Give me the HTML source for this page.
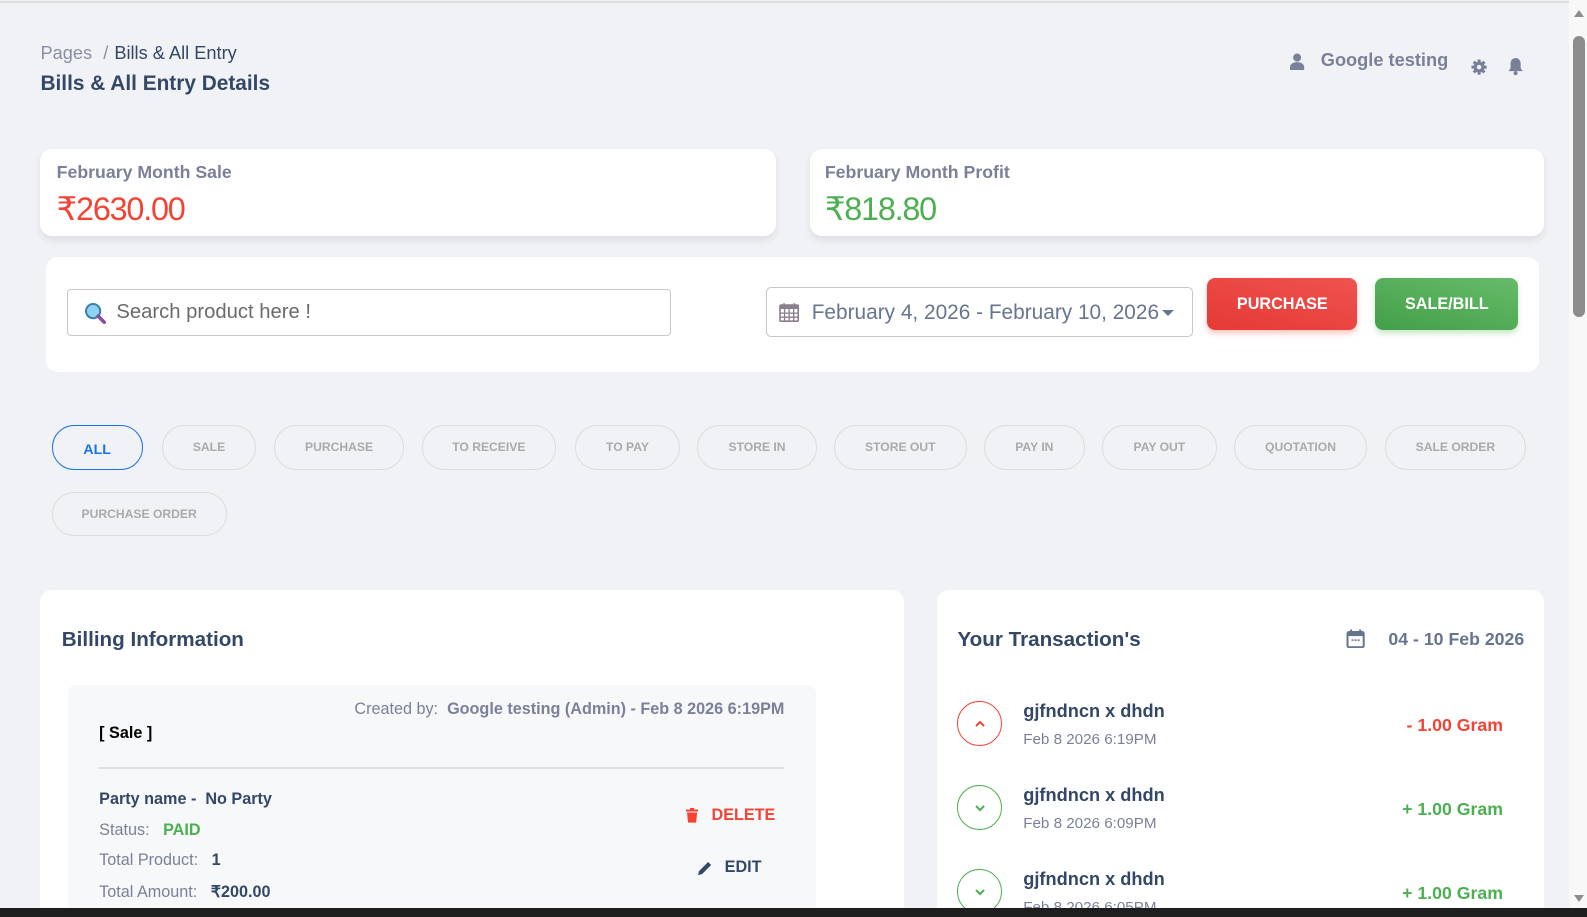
<!DOCTYPE html>
<html><head><meta charset="utf-8"><style>
*{box-sizing:border-box;margin:0;padding:0}
html,body{width:1587px;height:917px;overflow:hidden;background:#f0f2f5;font-family:"Liberation Sans",Arial,sans-serif}
#w{position:relative;width:1568px;height:906px;zoom:1.0121;background:#f0f2f5}
.a{position:absolute;white-space:nowrap}
.card{position:absolute;background:#fff;border-radius:12px}
.chip{position:absolute;height:44px;border:1px solid #dcdcdc;border-radius:22px;font-size:12px;font-weight:bold;color:#aaa;display:flex;align-items:center;justify-content:center;top:420px}
.circ{position:absolute;width:44px;height:44px;border-radius:50%;border:1.5px solid;display:flex;align-items:center;justify-content:center}
.tn{font-size:18px;font-weight:bold;color:#344767}
.td{font-size:15px;color:#7b809a}
</style></head><body><div id="w">
<div class="a" style="left:0;top:1px;width:1550px;height:2px;background:#ddd"></div>
<div class="a" style="left:40px;top:42px;font-size:18px;color:#8a8fa3">Pages <span style="margin:0 6px">/</span><span style="color:#344767">Bills &amp; All Entry</span></div>
<div class="a" style="left:40px;top:71px;font-size:20.6px;font-weight:bold;color:#344767">Bills &amp; All Entry Details</div>
<svg class="a" style="left:1274px;top:52px" width="16" height="17" viewBox="0 0 16 17"><circle cx="8" cy="4.5" r="4" fill="#7b809a"/><path d="M1 17v-3c0-3 3-5 7-5s7 2 7 5v3z" fill="#7b809a"/></svg>
<div class="a" style="left:1305px;top:49px;font-size:18px;font-weight:bold;color:#7b809a">Google testing</div>
<svg class="a" style="left:1453px;top:58px" width="16" height="16" viewBox="0 0 16 16"><g fill="#7b809a"><circle cx="8" cy="8" r="5.5"/><rect x="6.5" y="0.5" width="3" height="15"/><rect x="0.5" y="6.5" width="15" height="3"/><rect x="6.5" y="0.5" width="3" height="15" transform="rotate(45 8 8)"/><rect x="6.5" y="0.5" width="3" height="15" transform="rotate(-45 8 8)"/></g><circle cx="8" cy="8" r="2.2" fill="#f0f2f5"/></svg>
<svg class="a" style="left:1489px;top:56px" width="17" height="19" viewBox="0 0 17 19"><path d="M8.5 1c-3 0-5 2.5-5 5.5v4.5L1.5 14h14l-2-3V6.5C13.5 3.5 11.5 1 8.5 1z" fill="#7b809a"/><circle cx="8.5" cy="16" r="2" fill="#7b809a"/></svg>

<div class="card" style="left:40px;top:147px;width:727px;height:86px;box-shadow:0 4px 8px rgba(0,0,0,.08)"></div>
<div class="a" style="left:56px;top:160px;font-size:17.5px;font-weight:bold;color:#7b809a">February Month Sale</div>
<div class="a" style="left:56px;top:188px;font-size:32px;letter-spacing:-1.2px;color:#f44335">₹2630.00</div>
<div class="card" style="left:800px;top:147px;width:726px;height:86px;box-shadow:0 4px 8px rgba(0,0,0,.08)"></div>
<div class="a" style="left:815px;top:160px;font-size:17.5px;font-weight:bold;color:#7b809a">February Month Profit</div>
<div class="a" style="left:815px;top:188px;font-size:32px;letter-spacing:-1.2px;color:#4caf50">₹818.80</div>

<div class="card" style="left:45px;top:254px;width:1476px;height:114px"></div>
<div class="a" style="left:66px;top:286px;width:597px;height:46px;border:1px solid #c8c8c8;border-radius:4px;background:#fff"></div>
<svg class="a" style="left:83px;top:298px" width="22" height="22" viewBox="0 0 22 22"><circle cx="9" cy="9" r="7" fill="#8fd3f0" stroke="#3a7fb0" stroke-width="2"/><path d="M14 14l6 6" stroke="#8a4aa0" stroke-width="3.5" stroke-linecap="round"/></svg>
<div class="a" style="left:115px;top:297px;font-size:20px;color:#6a6a6a">Search product here !</div>
<div class="a" style="left:757px;top:284px;width:422px;height:49px;border:1px solid #c8c8c8;border-radius:5px;background:#fff"></div>
<svg class="a" style="left:770px;top:298px" width="20" height="20" viewBox="0 0 20 20"><rect x="1" y="3" width="18" height="16" rx="1" fill="none" stroke="#8a7f8f" stroke-width="1.6"/><rect x="1" y="3" width="18" height="4" fill="#8a7f8f"/><path d="M1 11h18M1 15h18M5.5 7v12M10 7v12M14.5 7v12M5 1v4M15 1v4" stroke="#8a7f8f" stroke-width="1.3"/></svg>
<div class="a" style="left:802px;top:297px;font-size:20.6px;color:#67748e">February 4, 2026 - February 10, 2026</div>
<div class="a" style="left:1148px;top:306px;width:0;height:0;border-left:6px solid transparent;border-right:6px solid transparent;border-top:6px solid #67748e"></div>
<div class="a" style="left:1193px;top:275px;width:148px;height:51px;border-radius:8px;background:linear-gradient(195deg,#ef5350,#e53935);box-shadow:0 3px 6px rgba(244,67,53,.3);color:#fff;font-size:16px;font-weight:bold;display:flex;align-items:center;justify-content:center">PURCHASE</div>
<div class="a" style="left:1359px;top:275px;width:141px;height:51px;border-radius:8px;background:linear-gradient(195deg,#66bb6a,#43a047);box-shadow:0 3px 6px rgba(76,175,80,.3);color:#fff;font-size:16px;font-weight:bold;display:flex;align-items:center;justify-content:center">SALE/BILL</div>

<div class="chip" style="left:51px;width:90px;border-color:#1a73e8;color:#1a73e8;font-size:14px;padding-top:6px">ALL</div>
<div class="chip" style="left:160px;width:93px">SALE</div>
<div class="chip" style="left:271px;width:128px">PURCHASE</div>
<div class="chip" style="left:417px;width:132px">TO RECEIVE</div>
<div class="chip" style="left:568px;width:104px">TO PAY</div>
<div class="chip" style="left:689px;width:118px">STORE IN</div>
<div class="chip" style="left:824px;width:131px">STORE OUT</div>
<div class="chip" style="left:972px;width:100px">PAY IN</div>
<div class="chip" style="left:1089px;width:113px">PAY OUT</div>
<div class="chip" style="left:1219px;width:132px">QUOTATION</div>
<div class="chip" style="left:1368px;width:140px">SALE ORDER</div>
<div class="chip" style="left:51px;width:173px;top:486px">PURCHASE ORDER</div>

<div class="card" style="left:40px;top:583px;width:853px;height:340px"></div>
<div class="a" style="left:61px;top:620px;font-size:20.4px;font-weight:bold;color:#344767">Billing Information</div>
<div class="a" style="left:67px;top:677px;width:739px;height:260px;background:#f7f8fa;border-radius:8px"></div>
<div class="a" style="right:793px;top:692px;font-size:16px;color:#7b809a">Created by: &nbsp;<b>Google testing (Admin) - Feb 8 2026 6:19PM</b></div>
<div class="a" style="left:98px;top:715px;font-size:16px;font-weight:bold;color:#000">[ Sale ]</div>
<div class="a" style="left:98px;top:758px;width:677px;height:2px;background:#dcdde2"></div>
<div class="a" style="left:98px;top:781px;font-size:16px;font-weight:bold;color:#344767">Party name - &nbsp;No Party</div>
<div class="a" style="left:98px;top:811px;font-size:16px;color:#7b809a">Status: &nbsp;&nbsp;<b style="color:#4caf50">PAID</b></div>
<div class="a" style="left:98px;top:841px;font-size:16px;color:#7b809a">Total Product: &nbsp;&nbsp;<b style="color:#344767">1</b></div>
<div class="a" style="left:98px;top:871px;font-size:16px;color:#7b809a">Total Amount: &nbsp;&nbsp;<b style="color:#344767">₹200.00</b></div>
<svg class="a" style="left:678px;top:798px" width="12" height="15" viewBox="0 0 12 15"><rect x="0" y="1.5" width="12" height="2" fill="#f44335"/><rect x="4" y="0" width="4" height="2" fill="#f44335"/><path d="M1 4.5h10l-1 10H2z" fill="#f44335"/></svg>
<div class="a" style="left:703px;top:796px;font-size:16px;font-weight:bold;color:#f44335">DELETE</div>
<svg class="a" style="left:689px;top:850px" width="16" height="16" viewBox="0 0 16 16"><path d="M1 15l1-4L11 2l3 3-9 9z" fill="#344767"/></svg>
<div class="a" style="left:716px;top:848px;font-size:16px;font-weight:bold;color:#344767">EDIT</div>

<div class="card" style="left:926px;top:583px;width:600px;height:340px"></div>
<div class="a" style="left:946px;top:620px;font-size:20.4px;font-weight:bold;color:#344767">Your Transaction's</div>
<svg class="a" style="left:1330px;top:621px" width="19" height="19" viewBox="0 0 19 19"><rect x="1.5" y="3" width="16" height="15" rx="1.5" fill="none" stroke="#67748e" stroke-width="2"/><rect x="1.5" y="3" width="16" height="4" fill="#67748e"/><path d="M5 0.5v4M14 0.5v4" stroke="#67748e" stroke-width="2"/><path d="M5.5 11h2M8.5 11h2M11.5 11h2" stroke="#67748e" stroke-width="1.5"/></svg>
<div class="a" style="right:62px;top:621px;font-size:17.5px;font-weight:bold;color:#67748e">04 - 10 Feb 2026</div>

<div class="circ" style="left:946px;top:693px;border-color:#f44335"><svg width="12" height="8" viewBox="0 0 12 8"><path d="M2 6l4-4 4 4" fill="none" stroke="#f44335" stroke-width="2"/></svg></div>
<div class="a tn" style="left:1011px;top:693px">gjfndncn x dhdn</div>
<div class="a td" style="left:1011px;top:722px">Feb 8 2026 6:19PM</div>
<div class="a" style="right:83px;top:706px;font-size:17.5px;font-weight:bold;color:#f44335">- 1.00 Gram</div>

<div class="circ" style="left:946px;top:776px;border-color:#4caf50"><svg width="12" height="8" viewBox="0 0 12 8"><path d="M2 2l4 4 4-4" fill="none" stroke="#4caf50" stroke-width="2"/></svg></div>
<div class="a tn" style="left:1011px;top:776px">gjfndncn x dhdn</div>
<div class="a td" style="left:1011px;top:805px">Feb 8 2026 6:09PM</div>
<div class="a" style="right:83px;top:789px;font-size:17.5px;font-weight:bold;color:#4caf50">+ 1.00 Gram</div>

<div class="circ" style="left:946px;top:859px;border-color:#4caf50"><svg width="12" height="8" viewBox="0 0 12 8"><path d="M2 2l4 4 4-4" fill="none" stroke="#4caf50" stroke-width="2"/></svg></div>
<div class="a tn" style="left:1011px;top:859px">gjfndncn x dhdn</div>
<div class="a td" style="left:1011px;top:888px">Feb 8 2026 6:05PM</div>
<div class="a" style="right:83px;top:872px;font-size:17.5px;font-weight:bold;color:#4caf50">+ 1.00 Gram</div>

<div class="a" style="left:1550px;top:0;width:18px;height:906px;background:#f8f8f8"></div>
<div class="a" style="left:1554px;top:36px;width:12px;height:277px;border-radius:6px;background:#8c8c8c"></div>
<div class="a" style="left:1555px;top:10px;width:0;height:0;border-left:5px solid transparent;border-right:5px solid transparent;border-bottom:7px solid #8c8c8c"></div>
<div class="a" style="left:1555px;top:884px;width:0;height:0;border-left:5px solid transparent;border-right:5px solid transparent;border-top:7px solid #8c8c8c"></div>
<div class="a" style="left:0;top:897px;width:1568px;height:9px;background:#1e1e1e"></div>
</div></body></html>
